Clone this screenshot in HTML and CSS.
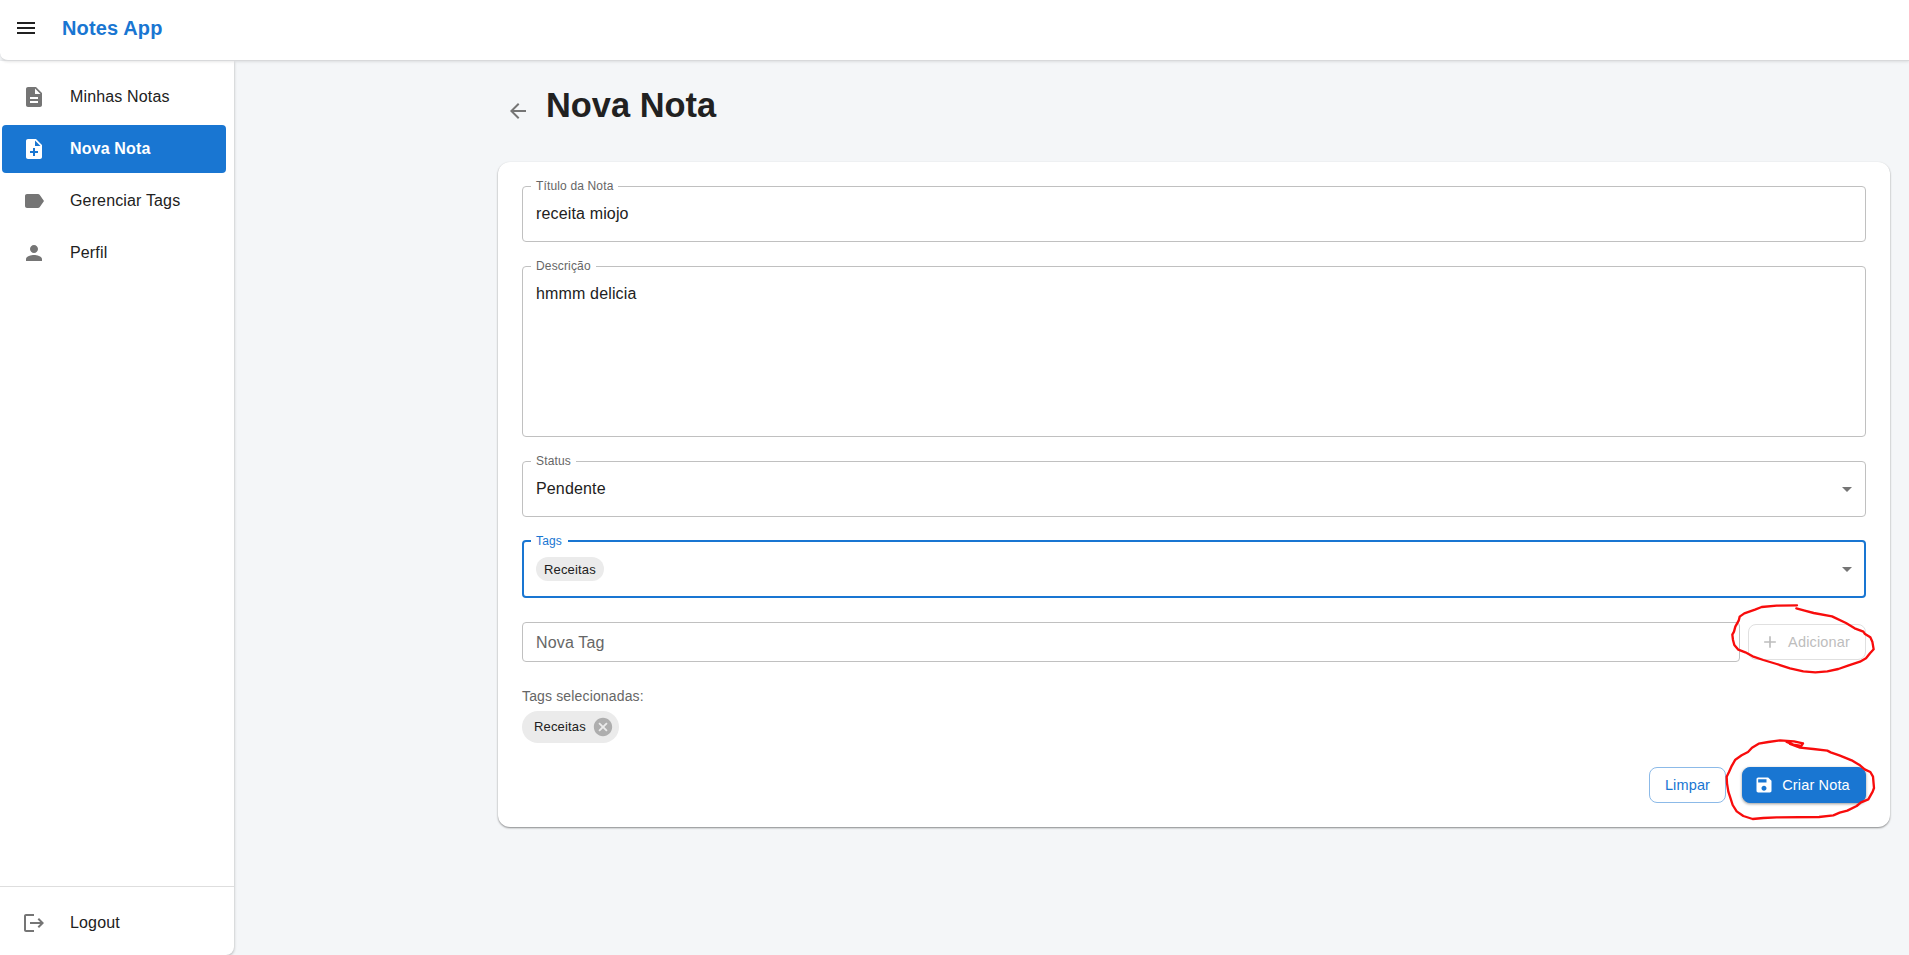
FILE: index.html
```html
<!DOCTYPE html>
<html lang="pt-BR">
<head>
<meta charset="utf-8">
<title>Notes App</title>
<link rel="stylesheet" href="styles.css">
</head>
<body>
<header class="topbar">
  <svg class="icon menu" viewBox="0 0 24 24"><path d="M3 18h18v-2H3zm0-5h18v-2H3zm0-7v2h18V6z"/></svg>
  <span class="brand">Notes App</span>
</header>
<div class="layout">
  <aside class="sidebar">
    <nav class="nav">
      <a class="item"><svg class="icon" viewBox="0 0 24 24"><path d="M14 2H6c-1.100 0-1.990.9-1.990 2L4 20c0 1.100.89 2 1.990 2H18c1.100 0 2-.9 2-2V8zm2 16H8v-2h8zm0-4H8v-2h8zm-3-5V3.500L18.500 9z"/></svg><span>Minhas Notas</span></a>
      <a class="item active"><svg class="icon" viewBox="0 0 24 24"><path d="M14 2H6c-1.100 0-1.990.9-1.990 2L4 20c0 1.100.89 2 1.990 2H18c1.100 0 2-.9 2-2V8zm2 14h-3v3h-2v-3H8v-2h3v-3h2v3h3zm-3-7V3.500L18.500 9z"/></svg><span>Nova Nota</span></a>
      <a class="item"><svg class="icon" viewBox="0 0 24 24"><path d="M17.630 5.840C17.270 5.330 16.670 5 16 5L5 5.010C3.900 5.010 3 5.900 3 7v10c0 1.100.9 1.990 2 1.990L16 19c.67 0 1.270-.33 1.630-.84L22 12z"/></svg><span>Gerenciar Tags</span></a>
      <a class="item"><svg class="icon" viewBox="0 0 24 24"><path d="M12 12c2.210 0 4-1.790 4-4s-1.790-4-4-4-4 1.790-4 4 1.790 4 4 4m0 2c-2.670 0-8 1.340-8 4v2h16v-2c0-2.660-5.330-4-8-4"/></svg><span>Perfil</span></a>
    </nav>
    <div class="logout">
      <a class="item"><svg class="icon" viewBox="0 0 24 24"><path d="m17 7-1.410 1.410L18.170 11H8v2h10.170l-2.580 2.580L17 17l5-5zM4 5h8V3H4c-1.100 0-2 .9-2 2v14c0 1.100.9 2 2 2h8v-2H4z"/></svg><span>Logout</span></a>
    </div>
  </aside>
  <main class="main">
    <div class="heading">
      <svg class="icon" viewBox="0 0 24 24"><path d="M20 11H7.830l5.590-5.590L12 4l-8 8 8 8 1.410-1.410L7.830 13H20z"/></svg>
      <h1>Nova Nota</h1>
    </div>
    <section class="card">
      <fieldset class="field"><legend>Título da Nota</legend><div class="value">receita miojo</div></fieldset>
      <fieldset class="field area"><legend>Descrição</legend><div class="value">hmmm delicia</div></fieldset>
      <fieldset class="field"><legend>Status</legend><div class="value select">Pendente<svg class="icon" viewBox="0 0 24 24"><path d="m7 10 5 5 5-5z"/></svg></div></fieldset>
      <fieldset class="field focused"><legend>Tags</legend><div class="value select"><span class="chip small">Receitas</span><svg class="icon" viewBox="0 0 24 24"><path d="m7 10 5 5 5-5z"/></svg></div></fieldset>
      <div class="add-row">
        <div class="input">Nova Tag</div>
        <button class="btn disabled"><svg class="icon" viewBox="0 0 24 24"><path d="M19 13h-6v6h-2v-6H5v-2h6V5h2v6h6z"/></svg><span>Adicionar</span></button>
      </div>
      <div class="selected">
        <div class="caption">Tags selecionadas:</div>
        <span class="chip">Receitas<svg class="icon" viewBox="0 0 24 24"><path d="M12 2C6.470 2 2 6.470 2 12s4.470 10 10 10 10-4.470 10-10S17.530 2 12 2m5 13.590L15.590 17 12 13.410 8.410 17 7 15.590 10.590 12 7 8.410 8.410 7 12 10.590 15.590 7 17 8.410 13.410 12z"/></svg></span>
      </div>
      <div class="actions">
        <button class="btn outlined"><span>Limpar</span></button>
        <button class="btn primary"><svg class="icon" viewBox="0 0 24 24"><path d="M17 3H5c-1.110 0-2 .9-2 2v14c0 1.100.89 2 2 2h14c1.100 0 2-.9 2-2V7zm-5 16c-1.660 0-3-1.340-3-3s1.340-3 3-3 3 1.340 3 3-1.340 3-3 3m3-10H5V5h10z"/></svg><span>Criar Nota</span></button>
      </div>
    </section>
  </main>
</div>
<svg class="marks" viewBox="0 0 837 750">
  <path d="M501 46L440 47L395 51L375 59L343 70L329 80L326 92L316 110L312 125L307 134L309 150L313 165L325 179L346 187L368 199L400 210L440 222L480 235L520 244L556 247L592 244L625 237L654 227L690 215L708 205L720 190L731 178L727 155L721 142L704 131L700 125L674 115L648 99L606 79L551 69L524 62L499 55"/>
  <path d="M470 456L490 464L514 468L519 460L492 454L450 451L415 456L386 461L366 473L354 486L335 496L316 509L304 530L297 546L290 560L291 580L295 605L300 620L308 645L320 664L340 678L368 687L400 684L440 682L567 681L610 676L629 668L652 662L680 648L693 637L715 628L728 605L732 594L729 560L721 546L704 538L690 526L665 511L628 496L602 487L592 482L550 477L510 473L480 462"/>
</svg>
</body>
</html>
```
FILE: styles.css
```css
* { box-sizing: border-box; }
body {
  margin: 0;
  height: 955px;
  overflow: hidden;
  display: flex;
  flex-direction: column;
  background: #f4f6f8;
  color: #212121;
  font: 16px/24px "Liberation Sans", Arial, sans-serif;
  letter-spacing: 0.15px;
}
.icon { width: 24px; height: 24px; fill: #757575; flex: none; }
.topbar {
  height: 61px;
  flex: none;
  display: flex;
  align-items: center;
  gap: 24px;
  padding: 0 14px 5px;
  background: #fff;
  border-bottom: 1px solid #d8d9db;
  border-bottom-left-radius: 8px;
  box-shadow: 0 1px 3px rgba(0, 0, 0, 0.1);
  z-index: 1;
}
.menu { fill: #212121; }
.brand { font-size: 20px; font-weight: 700; color: #1976d2; }
.layout { flex: 1; display: flex; min-height: 0; }
.sidebar {
  width: 234px;
  flex: none;
  display: flex;
  flex-direction: column;
  justify-content: space-between;
  background: #fff;
  border-radius: 0 0 8px 0;
  box-shadow: 0 1px 3px rgba(0, 0, 0, 0.3);
}
.nav { display: flex; flex-direction: column; gap: 4px; padding: 12px 8px 0 2px; }
.item {
  height: 48px;
  display: flex;
  align-items: center;
  gap: 24px;
  padding: 0 20px;
  border-radius: 4px;
}
.active { background: #1976d2; color: #fff; font-weight: 700; }
.active .icon { fill: #fff; }
.logout { height: 69px; border-top: 1px solid #dedede; padding: 12px 8px 0 2px; }
.main { flex: 1; padding: 20px 19px 0 264px; }
.heading { height: 81px; display: flex; gap: 16px; padding-left: 8px; }
.heading .icon { margin-top: 18px; }
h1 { margin: 3px 0 0; font-size: 34.4px; line-height: 42px; letter-spacing: 0; }
.card {
  height: 665px;
  padding: 24px;
  background: #fff;
  border-radius: 12px;
  box-shadow: 0 1px 2px rgba(0, 0, 0, 0.45);
}
.field {
  margin: 0 0 24px;
  height: 56px;
  min-width: 0;
  padding: 0 13px;
  border: 1px solid #c0c0c0;
  border-radius: 4px;
}
.field legend {
  height: 1px;
  margin-left: -5px;
  padding: 0 5px;
  font-size: 12px;
  line-height: 0;
  color: #666;
}
.value { padding-top: 15px; }
.area { height: 171px; }
.select { display: flex; justify-content: space-between; align-items: center; }
.select .icon { margin-right: -7px; }
.focused { border: 2px solid #1976d2; height: 58px; margin-top: -1px; padding: 0 12px; }
.focused legend { height: 2px; padding-right: 6px; line-height: 2px; color: #1976d2; }
.chip {
  display: inline-flex;
  align-items: center;
  height: 32px;
  gap: 6px;
  padding: 0 5px 0 12px;
  border-radius: 16px;
  background: #ebebeb;
  font-size: 13px;
}
.chip .icon { width: 22px; height: 22px; fill: #aeaeae; }
.chip.small { height: 24px; padding: 1px 8px 0; }
.add-row { display: flex; align-items: center; gap: 8px; }
.input {
  flex: 1;
  height: 40px;
  padding: 8px 13px 6px;
  border: 1px solid #c0c0c0;
  border-radius: 4px;
  color: #666;
}
.btn {
  height: 36px;
  display: flex;
  align-items: center;
  justify-content: center;
  gap: 8px;
  padding: 0;
  border: 1px solid #1976d2;
  border-radius: 8px;
  background: #fff;
  font: 500 14.5px/20px "Liberation Sans", Arial, sans-serif;
  letter-spacing: 0.15px;
}
.btn .icon { width: 20px; height: 20px; }
.btn span { padding-bottom: 1px; }
.disabled { width: 118px; padding-right: 4px; border-color: #e0e0e0; color: #bdbdbd; }
.disabled .icon { fill: #bdbdbd; }
.selected { height: 81px; margin-top: 24px; }
.caption { height: 25px; font-size: 14px; line-height: 20px; color: #666; }
.actions { display: flex; justify-content: flex-end; gap: 16px; }
.outlined { width: 77px; border-color: #8cbae8; color: #1976d2; }
.primary { width: 124px; padding-right: 4px; background: #1976d2; color: #fff; box-shadow: 0 1px 3px rgba(0, 0, 0, 0.4); }
.primary .icon { fill: #fff; }
.marks { position: absolute; left: 1630px; top: 590px; width: 279px; height: 250px; z-index: 3; }
.marks path { fill: none; stroke: #f80c0c; stroke-width: 7; stroke-linejoin: round; stroke-linecap: round; }
```
